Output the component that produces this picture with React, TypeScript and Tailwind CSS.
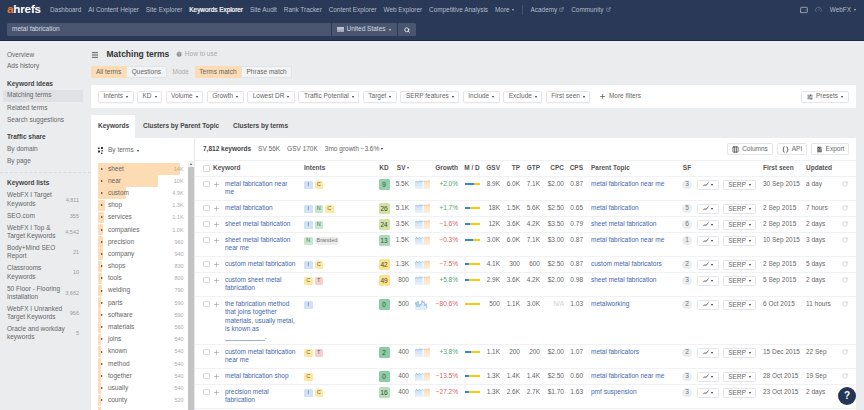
import { Plus, RotateCw, Search, Columns3, FileText, Braces, SlidersHorizontal, Menu, HelpCircle, ExternalLink, Tablet, Gauge } from "lucide-react";

const NAV = ["Dashboard", "AI Content Helper", "Site Explorer", "Keywords Explorer", "Site Audit", "Rank Tracker", "Content Explorer", "Web Explorer", "Competitive Analysis"];
const FILTERS = ["Intents", "KD", "Volume", "Growth", "Lowest DR", "Traffic Potential", "Target", "SERP features", "Include", "Exclude", "First seen"];

const LISTS = [
  { name: "WebFX I Target Keywords", n: "4,811" },
  { name: "SEO.com", n: "355" },
  { name: "WebFX I Top & Target Keywords", n: "4,542" },
  { name: "Body+Mind SEO Report", n: "21" },
  { name: "Classrooms Keywords", n: "10" },
  { name: "50 Floor - Flooring Installation", n: "3,662" },
  { name: "WebFX I Unranked Target Keywords", n: "966" },
  { name: "Oracle and workday keywords", n: "5" },
];

const TERMS: [string, string, number][] = [
  ["sheet", "14K", 82], ["near", "10K", 60], ["custom", "4.9K", 28], ["shop", "1.3K", 7], ["services", "1.1K", 6],
  ["companies", "1.0K", 5], ["precision", "960", 5], ["company", "940", 5], ["shops", "830", 4], ["tools", "800", 4],
  ["welding", "790", 4], ["parts", "590", 3], ["software", "590", 3], ["materials", "560", 3], ["joins", "540", 3],
  ["known", "540", 3], ["method", "540", 3], ["together", "540", 3], ["usually", "540", 3], ["county", "520", 3],
];

const INTENT: Record<string, string> = {
  I: "bg-[#cfe2f7]",
  C: "bg-[#fde8a0]",
  N: "bg-[#c5e9cc]",
  T: "bg-[#f7cfd0]",
};

interface Row {
  kw: string; intents: string[]; branded?: boolean; kd: number; kdColor: string; sv: string; growth: string; up: boolean;
  md: number; gsv: string; tp: string; gtp: string; cpc: string; cps: string; parent: string; sf: number; seen: string; upd: string;
  h: string; spark: string;
}

const FLAT = "0,2 1.5,1.5 3,2 4.5,1 6,1.5 7.5,1 9,1.5 10.5,1 12,1.5 13.5,0.5 15,1";
const WAVY = "0,3.5 1.5,1.5 3,3 4.5,1.5 6,2.5 7.5,1.5 9,2.5 10.5,1 12,2 13.5,1 15,1.5";

const ROWS: Row[] = [
  { kw: "metal fabrication near me", intents: ["I", "C"], kd: 9, kdColor: "bg-[#91d0a8]", sv: "5.5K", growth: "+2.0%", up: true, md: 62, gsv: "8.9K", tp: "6.0K", gtp: "7.1K", cpc: "$2.00", cps: "0.87", parent: "metal fabrication near me", sf: 3, seen: "30 Sep 2015", upd: "a day", h: "h-[24px]", spark: FLAT },
  { kw: "metal fabrication", intents: ["I", "N", "C"], kd: 26, kdColor: "bg-[#d2e2a2]", sv: "5.1K", growth: "+1.7%", up: true, md: 35, gsv: "18K", tp: "1.5K", gtp: "5.6K", cpc: "$2.50", cps: "0.65", parent: "metal fabrication", sf: 5, seen: "2 Sep 2015", upd: "7 hours", h: "h-[16px]", spark: FLAT },
  { kw: "sheet metal fabrication", intents: ["I", "N"], kd: 24, kdColor: "bg-[#d2e2a2]", sv: "3.5K", growth: "\u22121.6%", up: false, md: 30, gsv: "12K", tp: "3.6K", gtp: "4.2K", cpc: "$3.50", cps: "0.79", parent: "sheet metal fabrication", sf: 6, seen: "2 Sep 2015", upd: "2 days", h: "h-[16px]", spark: FLAT },
  { kw: "sheet metal fabrication near me", intents: ["N"], branded: true, kd: 13, kdColor: "bg-[#a9dcb6]", sv: "1.5K", growth: "\u22120.3%", up: false, md: 55, gsv: "3.0K", tp: "6.0K", gtp: "7.1K", cpc: "$3.00", cps: "0.87", parent: "metal fabrication near me", sf: 1, seen: "10 Sep 2015", upd: "3 days", h: "h-[24px]", spark: WAVY },
  { kw: "custom metal fabrication", intents: ["I", "C"], kd: 42, kdColor: "bg-[#fde28c]", sv: "1.3K", growth: "\u22127.5%", up: false, md: 25, gsv: "4.1K", tp: "300", gtp: "600", cpc: "$2.50", cps: "0.87", parent: "custom metal fabricators", sf: 2, seen: "2 Sep 2015", upd: "5 days", h: "h-[16px]", spark: WAVY },
  { kw: "custom sheet metal fabrication", intents: ["C", "T"], kd: 49, kdColor: "bg-[#fde28c]", sv: "800", growth: "+5.8%", up: true, md: 28, gsv: "2.9K", tp: "3.6K", gtp: "4.2K", cpc: "$2.00", cps: "0.98", parent: "sheet metal fabrication", sf: 3, seen: "5 Sep 2015", upd: "2 days", h: "h-[24px]", spark: FLAT },
  { kw: "the fabrication method that joins together materials, usually metal, is known as ___________.", intents: ["I"], kd: 0, kdColor: "bg-[#8bcda3]", sv: "500", growth: "\u221280.6%", up: false, md: 0, gsv: "500", tp: "1.1K", gtp: "3.0K", cpc: "N/A", cps: "1.03", parent: "metalworking", sf: 2, seen: "6 Oct 2015", upd: "11 hours", h: "h-[48px]", spark: "" },
  { kw: "custom metal fabrication near me", intents: ["C", "T"], kd: 2, kdColor: "bg-[#8bcda3]", sv: "400", growth: "+3.8%", up: true, md: 42, gsv: "1.1K", tp: "200", gtp: "200", cpc: "$2.00", cps: "1.07", parent: "metal fabricators", sf: 2, seen: "15 Dec 2015", upd: "22 Sep", h: "h-[24px]", spark: FLAT },
  { kw: "metal fabrication shop", intents: ["C"], kd: 0, kdColor: "bg-[#8bcda3]", sv: "400", growth: "\u221213.5%", up: false, md: 28, gsv: "1.3K", tp: "1.4K", gtp: "1.4K", cpc: "$2.50", cps: "0.60", parent: "metal fabrication near me", sf: 3, seen: "28 Oct 2015", upd: "19 Sep", h: "h-[16px]", spark: WAVY },
  { kw: "precision metal fabrication", intents: ["I", "C"], kd: 16, kdColor: "bg-[#b2dfb6]", sv: "400", growth: "\u221227.2%", up: false, md: 28, gsv: "1.3K", tp: "2.6K", gtp: "2.7K", cpc: "$1.70", cps: "1.63", parent: "pmf suspension", sf: 3, seen: "23 Oct 2015", upd: "2 days", h: "h-[24px]", spark: WAVY },
];

function Caret({ className = "" }: { className?: string }) {
  return <span className={`inline-block w-0 h-0 border-x-[1.8px] border-x-transparent border-t-[2.2px] border-t-current ${className}`} />;
}

function Filter({ label }: { label: string }) {
  return (
    <div className="h-[12px] px-[4.5px] flex items-center gap-[3px] bg-white border border-[#e4e5e8] rounded-[1.5px] text-[#666] shadow-[0_0.5px_0.5px_rgba(0,0,0,0.06)]">
      {label}
      <Caret className="text-[#333]" />
    </div>
  );
}

function Spark({ points }: { points: string }) {
  if (!points) {
    return (
      <svg width="16" height="10" viewBox="0 0 16 10" className="block">
        <polygon points="0,10 0,5 1,2 2,7 3,1 4,7 5,4 6,5.5 7,0.5 8,3 9,1.5 10,6 11,3.5 12,8 12,10" fill="#e1eefa" />
        <polyline points="0,5 1,2 2,7 3,1 4,7 5,4 6,5.5 7,0.5 8,3 9,1.5 10,6 11,3.5 12,8" fill="none" stroke="#7fb0e3" strokeWidth="0.7" />
        <circle cx="14.5" cy="8.5" r="0.4" fill="#bbb" />
      </svg>
    );
  }
  const pts = points.split(" ");
  return (
    <svg width="15" height="9" viewBox="0 0 15 9" className="block">
      <defs>
        <linearGradient id="sparkBlue" x1="0" y1="0" x2="0" y2="1">
          <stop offset="0" stopColor="#c6def6" />
          <stop offset="1" stopColor="#e9f2fb" />
        </linearGradient>
        <linearGradient id="sparkOrange" x1="0" y1="0" x2="0" y2="1">
          <stop offset="0" stopColor="#fcdcbc" />
          <stop offset="1" stopColor="#fdf0e2" />
        </linearGradient>
      </defs>
      <polygon points={`0,9 ${pts.slice(0, 6).join(" ")} 7.5,9`} fill="url(#sparkBlue)" />
      <polygon points={`8,9 ${pts.slice(6).join(" ")} 15,9`} fill="url(#sparkOrange)" />
      <polyline points={pts.slice(0, 6).join(" ")} fill="none" stroke="#6ea6e0" strokeWidth="0.6" />
      <polyline points={pts.slice(5).join(" ")} fill="none" stroke="#f3b070" strokeWidth="0.6" />
    </svg>
  );
}

function RowLine({ r }: { r: Row }) {
  return (
    <div className={`${r.h} flex border-b border-[#f0f1f2] pt-[3.5px] text-[#666] shrink-0`}>
      <div className="w-[30px] flex items-start pl-[8px]">
        <span className="w-[6.5px] h-[6.5px] mt-[0.5px] border border-[#d8d9dc] rounded-[1px] shrink-0" />
        <Plus className="w-[7px] h-[7px] mt-[0.5px] ml-[3.5px] text-[#999] shrink-0" strokeWidth={2} />
      </div>
      <div className="w-[79px] pr-[6px] text-[#3f66ad]">{r.kw}</div>
      <div className="w-[72px] flex gap-[2px] items-start">
        {r.intents.map((i) => (
          <span key={i} className={`w-[8.5px] h-[8px] mt-[0.5px] rounded-[1.5px] flex items-center justify-center text-[5.5px] leading-none text-[#666] ${INTENT[i]}`}>{i}</span>
        ))}
        {r.branded && <span className="h-[8px] mt-[0.5px] px-[2px] rounded-full bg-[#ececec] flex items-center text-[5.5px] leading-none text-[#777]">Branded</span>}
      </div>
      <div className="w-[16px] flex justify-center">
        <span className={`w-[11px] h-[11px] -mt-[1px] rounded-[1.5px] flex items-center justify-center text-[#444] ${r.kdColor}`}>{r.kd}</span>
      </div>
      <div className="w-[17px] text-right">{r.sv}</div>
      <div className="w-[24px] pl-[6px]"><Spark points={r.spark} /></div>
      <div className={`w-[25px] text-right ${r.up ? "text-[#4fa56f]" : "text-[#d8605f]"}`}>{r.growth}</div>
      <div className="w-[26px] pl-[7px] pt-[2.5px]">
        <div className="w-[15px] h-[2.5px] flex bg-[#fdc90f]">
          <div className="h-full bg-[#2f8be0]" style={{ width: `${r.md}%` }} />
        </div>
      </div>
      <div className="w-[16px] text-right">{r.gsv}</div>
      <div className="w-[20px] text-right">{r.tp}</div>
      <div className="w-[20px] text-right">{r.gtp}</div>
      <div className={`w-[24px] text-right ${r.cpc === "N/A" ? "text-[#ccc]" : ""}`}>{r.cpc}</div>
      <div className="w-[19px] text-right">{r.cps}</div>
      <div className="w-[97px] pl-[8px] text-[#3f66ad] whitespace-nowrap">{r.parent}</div>
      <div className="w-[14px] flex justify-center">
        <span className="w-[9.5px] h-[9.5px] -mt-[0.5px] rounded-full bg-[#ebecee] flex items-center justify-center text-[#777]">{r.sf}</span>
      </div>
      <div className="w-[27px] pl-[3px]">
        <div className="w-[22px] h-[10px] -mt-[0.5px] flex items-center justify-center gap-[2.5px] border border-[#e4e5e8] rounded-[1.5px]">
          <svg width="6" height="5" viewBox="0 0 6 5" className="block">
            <polyline points="0.3,4.2 1.8,2.6 2.9,3.4 5.6,0.8" fill="none" stroke="#333" strokeWidth="0.8" />
          </svg>
          <Caret className="text-[#333]" />
        </div>
      </div>
      <div className="w-[37px] pl-[2px]">
        <div className="w-[33px] h-[10px] -mt-[0.5px] flex items-center justify-center gap-[3px] border border-[#e4e5e8] rounded-[1.5px]">
          SERP
          <Caret className="text-[#333]" />
        </div>
      </div>
      <div className="w-[48px] pl-[5px] whitespace-nowrap">{r.seen}</div>
      <div className="w-[34px] whitespace-nowrap">{r.upd}</div>
      <div className="w-[10px] pl-[2px] pt-[1px]">
        <RotateCw className="w-[6px] h-[6px] text-[#aaa]" strokeWidth={1.5} />
      </div>
    </div>
  );
}

export default function App() {
  return (
    <div className="w-[864px] h-[410px] overflow-hidden relative bg-[#ebecee] text-[6.5px] leading-[8.3px] text-[#666] font-['Liberation_Sans',Arial,sans-serif]">
      {/* Header */}
      <div className="h-[41px] bg-[#2a3957] border-b border-[#1f2c46]">
        <div className="h-[20px] flex items-center pl-[7px] pr-[8px] text-[6.4px] text-[#b4bccb]">
          <div className="w-[43px] text-[11.5px] leading-none font-bold text-white tracking-[-0.1px]">
            <span className="text-[#f2801f]">a</span>hrefs
          </div>
          <div className="flex gap-[6.9px] whitespace-nowrap">
            {NAV.map((n) => (
              <span key={n} className={n === "Keywords Explorer" ? "text-white [-webkit-text-stroke:0.2px_white]" : ""}>{n}</span>
            ))}
          </div>
          <div className="flex items-center gap-[2px] ml-[7px]">More <Caret /></div>
          <div className="w-px h-[10px] bg-[#44516d] ml-[8px] mr-[8px]" />
          <div className="flex items-center gap-[2px]">Academy <ExternalLink className="w-[5px] h-[5px]" /></div>
          <div className="flex items-center gap-[2px] ml-[7px]">Community <ExternalLink className="w-[5px] h-[5px]" /></div>
          <div className="ml-auto flex items-center gap-[7px]">
            <Tablet className="w-[8px] h-[8px] -rotate-90 text-[#c4cad6]" />
            <Gauge className="w-[7px] h-[7px] text-[#7f8aa0]" />
            <span className="flex items-center gap-[3px] ml-[1px]">WebFX <Caret /></span>
          </div>
        </div>
        <div className="flex h-[13px] mt-[3px] ml-[7px] gap-px text-[#d4d8e0]">
          <div className="w-[324px] bg-[#4a5670] rounded-l-[1.5px] flex items-center pl-[5px]">metal fabrication</div>
          <div className="w-[65px] bg-[#4a5670] flex items-center pl-[5px] gap-[2px]">
            <span className="w-[6.5px] h-[4.5px] bg-gradient-to-b from-[#c9ccd6] to-[#9aa0b8] mr-px" />
            United States <Caret className="ml-px" />
          </div>
          <div className="w-[18px] bg-[#4a5670] rounded-r-[1.5px] flex items-center justify-center">
            <Search className="w-[6px] h-[6px] text-white" strokeWidth={3} />
          </div>
        </div>
      </div>

      <div className="flex">
        {/* Sidebar */}
        <div className="w-[91px] shrink-0 pl-[3px] pr-[8px] pt-[9.5px]">
          <div className="pl-[4px] space-y-[3.7px]">
            <div>Overview</div>
            <div>Ads history</div>
          </div>
          <div className="pl-[4px] mt-[9px] font-bold text-[#444]">Keyword ideas</div>
          <div className="mt-[1.5px] h-[12px] pl-[4px] flex items-center bg-[#e0e1e4] rounded-[1.5px]">Matching terms</div>
          <div className="pl-[4px] mt-[2px] space-y-[3.7px]">
            <div>Related terms</div>
            <div>Search suggestions</div>
          </div>
          <div className="pl-[4px] mt-[9.5px] font-bold text-[#444]">Traffic share</div>
          <div className="pl-[4px] mt-[3.5px] space-y-[3.7px]">
            <div>By domain</div>
            <div>By page</div>
          </div>
          <div className="border-t border-dashed border-[#d9dadd] mt-[7px] -ml-[3px] -mr-[8px]" />
          <div className="pl-[4px] mt-[6px] font-bold text-[#444]">Keyword lists</div>
          <div className="pl-[4px] pr-[4px] mt-[3.7px] space-y-[3.7px]">
            {LISTS.map((l) => (
              <div key={l.name} className="flex items-center justify-between">
                <span className="w-[58px]">{l.name}</span>
                <span className="text-[#999] text-[5.5px]">{l.n}</span>
              </div>
            ))}
          </div>
        </div>

        {/* Main */}
        <div className="w-[765px] shrink-0">
          <div className="h-[25px] flex items-center pt-[2px] text-[#333]">
            <Menu className="w-[8px] h-[8px] mr-[7.5px]" strokeWidth={2.4} />
            <span className="text-[8.5px] font-bold">Matching terms</span>
            <HelpCircle className="w-[6.5px] h-[6.5px] ml-[7px] mr-[2px] text-[#777] fill-[#888] stroke-[#ebecee]" />
            <span className="text-[#aaa]">How to use</span>
          </div>
          <div className="h-[12px] flex items-center">
            <div className="h-full flex items-center px-[5px] bg-[#fddcb4] rounded-l-[1.5px]">All terms</div>
            <div className="h-full flex items-center px-[4.5px] bg-[#f2f3f4] border border-[#e2e3e6] rounded-r-[1.5px]">Questions</div>
            <span className="mx-[6px] text-[#aaa]">Mode</span>
            <div className="h-full flex items-center px-[4.5px] bg-[#fddcb4] rounded-l-[1.5px]">Terms match</div>
            <div className="h-full flex items-center px-[4.5px] bg-[#f2f3f4] border border-[#e2e3e6] rounded-r-[1.5px]">Phrase match</div>
          </div>
          <div className="h-[23px] mt-[7px] bg-white flex items-center px-[7px] gap-[3.5px]">
            {FILTERS.map((f) => <Filter key={f} label={f} />)}
            <div className="flex items-center gap-[3px] ml-[5px]">
              <Plus className="w-[7px] h-[7px] text-[#333]" strokeWidth={2} />
              More filters
            </div>
            <div className="ml-auto h-[12px] px-[5px] flex items-center gap-[3px] border border-[#e4e5e8] rounded-[1.5px]">
              <SlidersHorizontal className="w-[6px] h-[6px] text-[#333]" strokeWidth={2.4} />
              Presets
              <Caret className="text-[#333]" />
            </div>
          </div>
          <div className="h-[23px] mt-[7px] flex items-center font-bold text-[#444]">
            <div className="h-full w-[44px] pl-[7px] flex items-center bg-white">Keywords</div>
            <div className="ml-[8px]">Clusters by Parent Topic</div>
            <div className="ml-[14px]">Clusters by terms</div>
          </div>

          <div className="bg-white flex h-[272px]">
            {/* Terms panel */}
            <div className="w-[104px] shrink-0 border-r border-[#e8e9eb]">
              <div className="h-[25px] flex items-center pl-[7px] gap-[3px]">
                <svg width="7" height="7" viewBox="0 0 7 7" className="block">
                  <rect x="0" y="0.5" width="1.6" height="1.6" fill="#333" />
                  <rect x="3" y="0" width="2" height="2" fill="#333" />
                  <rect x="0" y="3.5" width="2" height="2" fill="#333" />
                  <rect x="3.5" y="3" width="1.4" height="1.4" fill="#333" />
                  <rect x="3" y="5.6" width="1.4" height="1.4" fill="#333" />
                </svg>
                By terms <Caret className="text-[#333]" />
              </div>
              <div className="flex">
                <div className="w-[90px] ml-[7px] flex flex-col gap-[0.7px]">
                  {TERMS.map(([t, n, w]) => (
                    <div key={t} className="relative h-[11.5px] flex items-center justify-between pr-[3.5px] pl-[3px] shrink-0">
                      <div className="absolute left-0 top-0 h-full bg-[#fddcb4] rounded-[1px]" style={{ width: w }} />
                      <span className="relative flex items-center gap-[3px]">
                        <span className="w-0 h-0 border-y-[1.6px] border-y-transparent border-l-[2.2px] border-l-[#333]" />
                        <span className="ml-[2px]">{t}</span>
                      </span>
                      <span className="relative text-[#aaa] text-[5.5px]">{n}</span>
                    </div>
                  ))}
                  <div className="h-[11.5px] w-[3px] bg-[#fddcb4] shrink-0" />
                </div>
                <div className="w-[6px] ml-[1px] -mt-[2px] bg-[#f1f1f1] flex flex-col items-center">
                  <span className="mt-[2px] mb-[2px] w-0 h-0 border-x-[1.5px] border-x-transparent border-b-[2px] border-b-[#555]" />
                  <div className="w-full h-[300px] bg-[#c4c4c4]" />
                </div>
              </div>
            </div>

            {/* Table */}
            <div className="flex-1 min-w-0 flex flex-col">
              <div className="h-[23px] flex items-center pl-[8px] pr-[7px] border-b border-[#f0f1f2] shrink-0">
                <span className="font-bold text-[#444]">7,812 keywords</span>
                <span className="ml-[7px]">SV 56K</span>
                <span className="ml-[7px]">GSV 170K</span>
                <span className="ml-[7px] flex items-center gap-[2px]">3mo growth &minus;3.6% <Caret className="text-[#333]" /></span>
                <div className="ml-auto flex gap-[4px]">
                  <div className="h-[12px] w-[46px] flex items-center justify-center gap-[3px] border border-[#e4e5e8] rounded-[1.5px]"><Columns3 className="w-[7px] h-[7px] text-[#333]" strokeWidth={2.4} />Columns</div>
                  <div className="h-[12px] w-[30px] flex items-center justify-center gap-[3px] border border-[#e4e5e8] rounded-[1.5px]"><Braces className="w-[7px] h-[7px] text-[#333]" strokeWidth={2.4} />API</div>
                  <div className="h-[12px] w-[38px] flex items-center justify-center gap-[3px] border border-[#e4e5e8] rounded-[1.5px]"><FileText className="w-[7px] h-[7px] text-[#333] fill-[#333] stroke-white" />Export</div>
                </div>
              </div>
              <div className="h-[15.7px] flex items-center border-b border-[#f0f1f2] font-bold text-[#555] shrink-0">
                <div className="w-[18px] pl-[8px] shrink-0"><span className="block w-[6.5px] h-[6.5px] border border-[#d8d9dc] rounded-[1px]" /></div>
                <div className="w-[91px] shrink-0">Keyword</div>
                <div className="w-[72px]">Intents</div>
                <div className="w-[16px] text-center">KD</div>
                <div className="w-[17px] flex items-center justify-end gap-[1.5px] text-[#555]">SV<Caret /></div>
                <div className="w-[49px] text-right">Growth</div>
                <div className="w-[26px] text-center pl-[2px]">M / D</div>
                <div className="w-[16px] text-right">GSV</div>
                <div className="w-[20px] text-right">TP</div>
                <div className="w-[20px] text-right">GTP</div>
                <div className="w-[24px] text-right">CPC</div>
                <div className="w-[19px] text-right">CPS</div>
                <div className="w-[97px] pl-[8px]">Parent Topic</div>
                <div className="w-[14px] text-center">SF</div>
                <div className="w-[64px]" />
                <div className="w-[48px] pl-[5px]">First seen</div>
                <div className="w-[34px]">Updated</div>
              </div>
              {ROWS.map((r) => <RowLine key={r.kw} r={r} />)}
            </div>
          </div>
        </div>
      </div>

      {/* Help bubble */}
      <div className="absolute left-[838px] top-[387px] w-[18px] h-[18px] rounded-full bg-[#243555] flex items-center justify-center text-white text-[10px] font-bold leading-none">?</div>
    </div>
  );
}
